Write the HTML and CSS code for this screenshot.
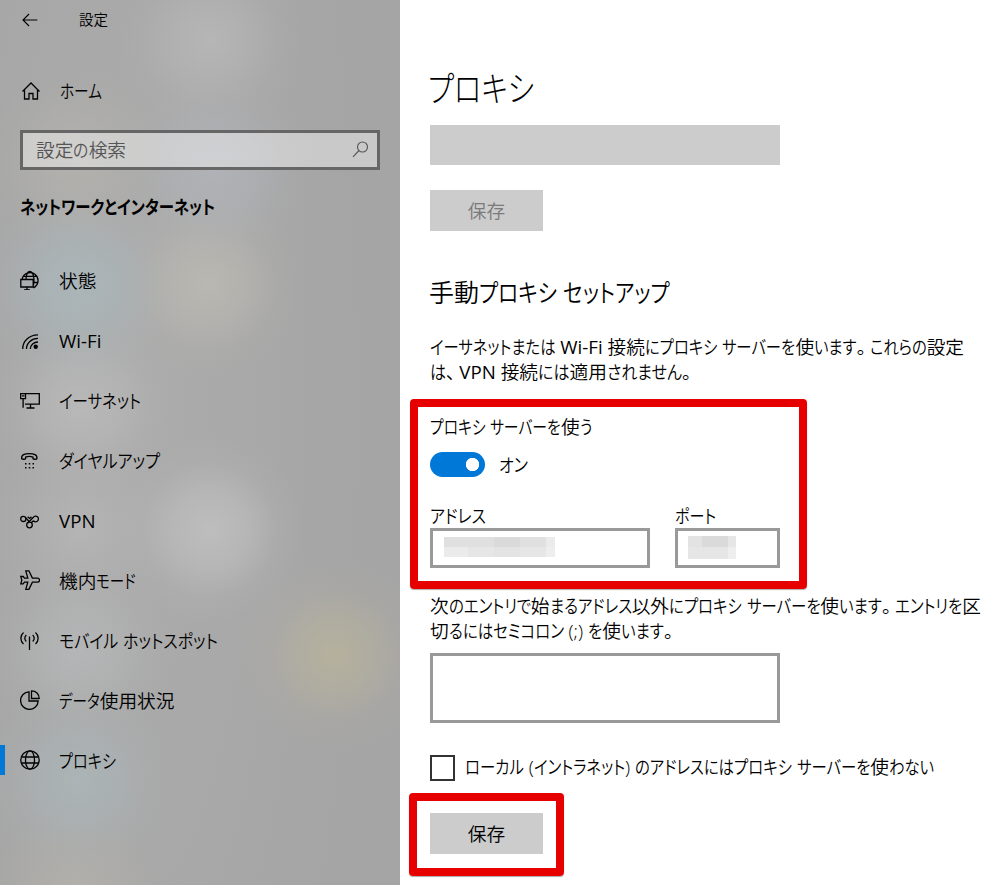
FILE: index.html
```html
<!DOCTYPE html>
<html lang="ja">
<head>
<meta charset="utf-8">
<title>設定</title>
<link rel="stylesheet" href="styles.css">
</head>
<body>
<div class="window">
  <aside class="sidebar">
    <header class="titlebar">
      <svg class="back" width="16" height="14" viewBox="0 0 16 14"><path d="M15.300 7H1M7 1L1 7l6 6"/></svg>
      <span class="caption">設定</span>
    </header>
    <div class="home">
      <svg class="icon" width="20" height="20" viewBox="0 0 20 20"><path d="M1.500 10.500L10 2l8.500 8.500M3.500 9v9H8v-5.500h4V18h4.500V9"/></svg>
      <span class="fit" data-width="42">ホーム</span>
    </div>
    <div class="search">
      <span class="fit" data-width="90">設定の検索</span>
      <svg width="17" height="17" viewBox="0 0 17 17"><circle cx="10.500" cy="6" r="5"/><path d="M7 9.500L1 15.800"/></svg>
    </div>
    <h2 class="group"><span class="fit" data-width="195">ネットワークとインターネット</span></h2>
    <nav class="nav">
      <a class="item"><svg class="icon" width="20" height="20" viewBox="0 0 20 20"><path d="M2.200 9A8 8 0 1 1 13.500 17.800M6 9C6.200 4.500 7.800 1.500 10 1.500s4 3.500 4 8.200c0 2.500-.3 4.800-1 6.600M3.500 6.300h14M14 12.500h4M.8 9.500h12.400v7.500H.8zM7 17v3M4 19.800h6"/></svg><span class="fit" data-width="37.5">状態</span></a>
      <a class="item"><svg class="icon" width="20" height="20" viewBox="0 0 20 20"><g transform="translate(0 1)"><path d="M2.700 18C2.700 10 9 4 18 3.800M6.500 18c0-6 5-10.500 11.500-10.600M10.400 18c0-4 3.300-6.900 7.600-7"/><circle class="solid" cx="15.700" cy="15.700" r="2.200"/></g></svg><span class="fit" data-width="43.5">Wi-Fi</span></a>
      <a class="item"><svg class="icon" width="20" height="20" viewBox="0 0 20 20"><path d="M5 3.700h14.300v10.500H5M10.500 14.500v3.500M6.500 18h8M.7 3.700h4.800v5H.7zM3.100 9v8.800M2 5.800h2.400"/></svg><span class="fit" data-width="82">イーサネット</span></a>
      <a class="item"><svg class="icon" width="20" height="20" viewBox="0 0 20 20"><path d="M1.700 8.700C1 4.700 5 3.700 9.300 3.700s8.300 1 7.600 5c-.3.700-3.600.7-3.900 0V7.200c-2-.8-5.400-.8-7.400 0v1.500c-.3.700-3.600.7-3.900 0z"/><path class="dots" d="M5 13.700h9M5 17.700h9"/></svg><span class="fit" data-width="101">ダイヤルアップ</span></a>
      <a class="item"><svg class="icon" width="20" height="20" viewBox="0 0 20 20"><circle cx="3.300" cy="8.900" r="2.600"/><path d="M5.600 7.600l3.300 3.700M7.600 6.800l2 1.700 1.900-1.700M7.700 13L13.400 7.300a2.800 2.800 0 1 1 .3 3.700c-1 .2-1.800.8-2.300 1.700"/><circle cx="9.500" cy="15" r="2.800"/></svg><span class="fit" data-width="37">VPN</span></a>
      <a class="item"><svg class="icon" width="20" height="20" viewBox="0 0 20 20"><path d="M12.400 8.100L8.900.8H5.800l2 7.300H4.500L3.200 6.500H.8l1 3.700-1 3.600h2.400l1.300-1.600h3.300l-2 7.200h3.100l3.500-7.200h5c1.400 0 2.100-.9 2.100-2s-.7-2.100-2.100-2.100z"/></svg><span class="fit" data-width="77">機内モード</span></a>
      <a class="item"><svg class="icon" width="20" height="20" viewBox="0 0 20 20"><path d="M9.500 6.500V20M3.500 2.500C0 5.500 0 11 3.500 14M15.500 2.500c3.500 3 3.500 8.500 0 11.500M6.300 5c-2 1.800-2 4.800 0 6.600M12.700 5c2 1.800 2 4.800 0 6.600"/></svg><span class="fit" data-width="159">モバイル ホットスポット</span></a>
      <a class="item"><svg class="icon" width="20" height="20" viewBox="0 0 20 20"><path d="M9 1.800a8.800 8.800 0 1 0 9.200 9.200H9zM11.500.8v7.700h7.700C19.200 4 16 .8 11.500.8z"/></svg><span class="fit" data-width="115.5">データ使用状況</span></a>
      <a class="item active"><svg class="icon" width="20" height="20" viewBox="0 0 20 20"><circle cx="10" cy="10" r="9.200"/><ellipse cx="10" cy="10" rx="4.500" ry="9.200"/><path d="M1.500 7h17M1.500 13h17"/></svg><span class="fit" data-width="57">プロキシ</span></a>
    </nav>
  </aside>
  <main class="main">
    <h1><span class="fit" data-width="106">プロキシ</span></h1>
    <div class="field-disabled"></div>
    <button class="button" disabled>保存</button>
    <h3><span class="fit" data-width="241">手動プロキシ セットアップ</span></h3>
    <p class="intro">
      <span class="fit line" data-width="534">イーサネットまたは Wi-Fi 接続にプロキシ サーバーを使います。これらの設定</span>
      <span class="fit line" data-width="265">は、VPN 接続には適用されません。</span>
    </p>
    <section class="mark mark-proxy">
      <div class="label"><span class="fit" data-width="162">プロキシ サーバーを使う</span></div>
      <div class="switch-row"><span class="switch"></span><span class="fit" data-width="29">オン</span></div>
      <div class="fields">
        <div class="field address">
          <span class="fit" data-width="56">アドレス</span>
          <div class="input"><div class="mosaic"><i class="c1"></i><i class="c1"></i><i class="c0"></i><i class="c1"></i><i class="c4"></i><i class="c4"></i><i class="c3"></i><i class="c2"></i><i class="c3"></i><i class="c5"></i></div></div>
        </div>
        <div class="field port">
          <span class="fit" data-width="41">ポート</span>
          <div class="input"><div class="mosaic"><i class="c2"></i><i class="c0"></i><i class="c3"></i><i class="c3"></i><i class="c3"></i><i class="c5"></i></div></div>
        </div>
      </div>
    </section>
    <p class="except">
      <span class="fit line" data-width="551">次のエントリで始まるアドレス以外にプロキシ サーバーを使います。エントリを区</span>
      <span class="fit line" data-width="247">切るにはセミコロン (;) を使います。</span>
    </p>
    <div class="textarea"></div>
    <div class="check"><span class="box"></span><span class="fit" data-width="469">ローカル (イントラネット) のアドレスにはプロキシ サーバーを使わない</span></div>
    <section class="mark mark-save"><button class="button">保存</button></section>
  </main>
</div>
<script src="kana.js"></script>
</body>
</html>
```
FILE: styles.css
```css
* { box-sizing: border-box; }
body {
  margin: 0;
  font-family: "Open Sans", "Noto Sans CJK JP", sans-serif;
  font-size: 18.7px;
  line-height: 25px;
  font-weight: 350;
  color: #000;
  background: #fff;
}
h1, h2, h3, p { margin: 0; }
.window { display: flex; width: 1004px; height: 885px; overflow: hidden; }
.fit { display: inline-block; white-space: nowrap; }
.kana, .stop { display: inline-block; transform-origin: 0 50%; font-feature-settings: "palt"; }
.stop { margin-right: 4px; }
.latin { font-weight: 400; }
.line { display: block; }

.sidebar {
  width: 400px;
  flex: none;
  background:
    radial-gradient(circle at 210px 40px, #bcbcbcb0, #bcbcbc60 40px, #bcbcbc18 70px, #bcbcbc00 95px),
    radial-gradient(circle at 75px 160px, #b8b6afa0, #b8b6af50 40px, #b8b6af18 70px, #b8b6af00 95px),
    radial-gradient(circle at 215px 170px, #b3b7bea0, #b3b7be60 40px, #b3b7be18 70px, #b3b7be00 95px),
    radial-gradient(circle at 77px 285px, #aab7bbe0, #aab7bb90 40px, #aab7bb28 72px, #aab7bb00 95px),
    radial-gradient(circle at 207px 283px, #bcbab2d8, #bcbab280 38px, #bcbab220 68px, #bcbab200 95px),
    radial-gradient(circle at 80px 405px, #bdbdbdc0, #bdbdbd70 40px, #bdbdbd20 68px, #bdbdbd00 95px),
    radial-gradient(circle at 80px 530px, #bababaa0, #bababa50 40px, #bababa18 70px, #bababa00 95px),
    radial-gradient(circle at 210px 530px, #c0c0c0e0, #c0c0c090 38px, #c0c0c020 68px, #c0c0c000 95px),
    radial-gradient(circle at 335px 655px, #b9b39cd8, #b9b39c80 36px, #b9b39c20 66px, #b9b39c00 95px),
    radial-gradient(circle at 78px 650px, #babcbda8, #babcbd60 40px, #babcbd18 70px, #babcbd00 95px),
    radial-gradient(circle at 78px 780px, #abb6b9d0, #abb6b980 40px, #abb6b920 70px, #abb6b900 95px),
    radial-gradient(circle at 75px 890px, #b6b3abb0, #b6b3ab60 35px, #b6b3ab00 85px),
    radial-gradient(ellipse 230px 900px at 130px 400px, #acacac, #a5a5a5);
}
svg { flex: none; fill: none; stroke: #000; stroke-width: 1.3; }
.solid { fill: #000; stroke: none; }
.dots { stroke-width: 1.5; stroke-dasharray: 1.5 2.250; }
.titlebar { height: 39px; padding-left: 22px; display: flex; align-items: center; gap: 41px; }
.back { stroke-width: 1.1; }
.caption { font-size: 14.5px; }
.home { height: 62px; margin-top: 20px; padding: 1px 0 0 21px; display: flex; align-items: center; gap: 19px; }
.search {
  margin: 9px 20px 0;
  height: 40px;
  border: 3px solid #666;
  background: #ffffff66;
  color: #555;
  display: flex;
  align-items: center;
  justify-content: space-between;
  padding: 0 8px 2px 13px;
}
.search svg { stroke: #555; stroke-width: 1.1; }
.group { margin: 24px 0 0 20px; font-size: 18.7px; font-weight: 700; }
.nav { margin-top: 31px; }
.item { height: 60px; padding-left: 20px; display: flex; align-items: center; gap: 19px; }
.active { background: linear-gradient(#0078d7, #0078d7) 0 50% / 5px 30px no-repeat; }

.main { flex: 1; padding-left: 30px; }
h1 { margin-left: -2px; padding-top: 64px; height: 125px; font-size: 35px; line-height: 50px; font-weight: 300; }
.field-disabled { width: 350px; height: 40px; background: #ccc; }
.button {
  display: block;
  width: 113px;
  height: 41px;
  padding: 0;
  border: 0;
  background: #ccc;
  font: inherit;
  color: #000;
}
.button:disabled { margin-top: 25px; color: #7a7a7a; }
h3 { margin: 43px 0 0 -1px; font-size: 25px; line-height: 36px; font-weight: 350; }
.intro { margin-top: 24px; }
.mark { border: 8px solid #e60000; border-radius: 4px; box-shadow: 0 1px 1px #0005; }
.mark-proxy { margin: 15px 0 0 -20px; width: 397px; height: 190px; padding: 7px 12px 0; }
.switch-row { display: flex; align-items: center; gap: 14px; height: 25px; margin-top: 13px; }
.switch {
  width: 55px;
  height: 25px;
  border-radius: 13px;
  background: radial-gradient(circle at 42.500px 12.500px, #fff 6.300px, #0078d7 7px);
}
.fields { display: flex; gap: 25px; margin-top: 26px; }
.field { height: 65px; }
.field .fit { display: block; height: 25px; }
.input { height: 40px; border: 3px solid #999; }
.address { width: 220px; }
.port { width: 105px; }
.mosaic { display: grid; }
.address .mosaic { margin: 6px 0 0 11px; grid-template: 10px 10px / 24px 26px 26px 26px 9px; }
.port .mosaic { margin: 5px 0 0 10px; grid-template: 11px 12px / 14px 26px 8px; }
.c0 { background: #dadada; }
.c1 { background: #e0e0e0; }
.c2 { background: #e3e3e3; }
.c3 { background: #e6e6e6; }
.c4 { background: #ebebeb; }
.c5 { background: #eee; }
.except { margin-top: 4px; }
.textarea { margin-top: 10px; width: 350px; height: 70px; border: 3px solid #999; }
.check { margin-top: 32px; height: 26px; display: flex; align-items: center; gap: 10px; }
.check .fit { margin-top: -3px; }
.box { width: 25px; height: 26px; border: 2.500px solid #333; }
.mark-save { margin: 12px 0 0 -21px; width: 155px; height: 83px; padding: 12px 13px; }
```
FILE: kana.js
```js
// Condenses the kana of each label so that the label takes its set width;
// kanji, Latin runs and punctuation keep their natural proportions.
const split = /([\u3040-\u30ff]+|[\u3001-\u3002]|[A-Za-z-]+)/;
const classOf = part =>
  /^[\u3040-\u30ff]/.test(part) ? 'kana'
  : /^[\u3001-\u3002]/.test(part) ? 'stop'
  : /^[A-Za-z]/.test(part) ? 'latin' : '';
for (const label of document.querySelectorAll('.fit')) {
  const target = Number(label.dataset.width);
  const display = getComputedStyle(label).display;
  label.style.display = 'inline-block';
  const parts = label.textContent.split(split).filter(Boolean);
  label.textContent = '';
  const runs = [];
  for (const part of parts) {
    const name = classOf(part);
    if (!name) {
      label.append(part);
      continue;
    }
    const run = document.createElement('span');
    run.className = name;
    run.textContent = part;
    label.append(run);
    if (name === 'kana') runs.push(run);
  }
  const total = label.getBoundingClientRect().width;
  const widths = runs.map(run => run.getBoundingClientRect().width);
  const sum = widths.reduce((a, b) => a + b, 0);
  const scale = sum ? (target - (total - sum)) / sum : 1;
  runs.forEach((run, i) => {
    run.style.transform = `scaleX(${scale})`;
    run.style.marginRight = `${widths[i] * (scale - 1)}px`;
  });
  label.style.display = display;
}
```
